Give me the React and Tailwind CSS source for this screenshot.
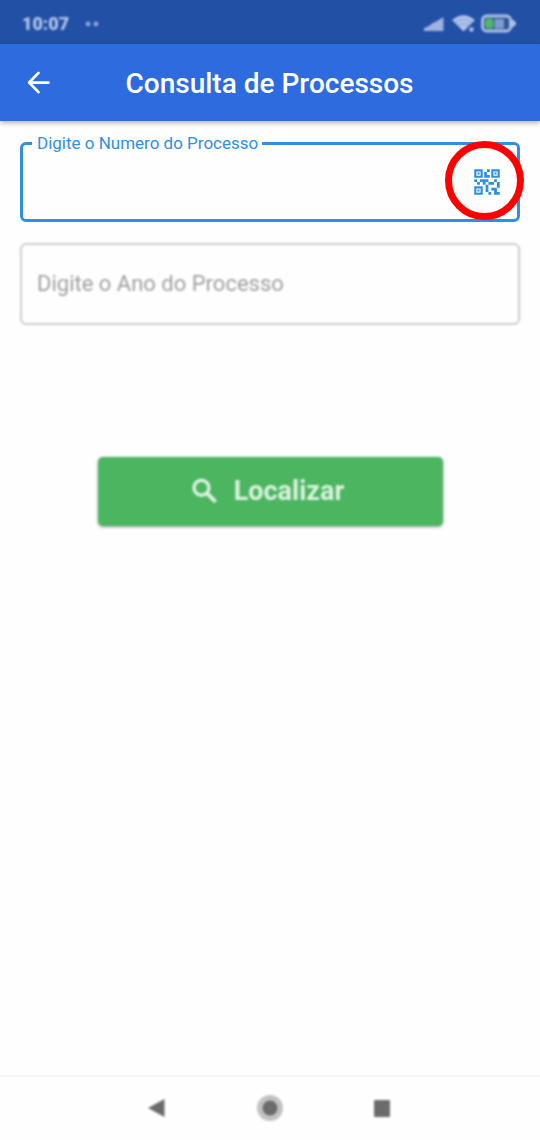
import { MdQrCode2 } from "react-icons/md";

function StatusBar() {
  return (
    <div className="flex h-11 items-center justify-between bg-[#2150a5] pt-1 pr-6 pl-[22px] text-[#b4c6ea]">
      <div className="flex items-center gap-4 blur-[1px]">
        <span className="text-[18px] leading-6 font-black">10:07</span>
        <svg width="14" height="6" viewBox="0 0 14 6" fill="#8fa9dc" aria-hidden="true">
          <circle cx="3" cy="3" r="2.4" />
          <circle cx="11" cy="3" r="2.4" />
        </svg>
      </div>
      <svg className="blur-[1px]" width="92" height="20" viewBox="0 0 92 20" aria-hidden="true">
        <path d="M0 17V14L4 12.500L8 9.500L12 7.500L19.500 3V17Z" fill="#9db3df" />
        <path d="M28 6Q39.500 -3.500 51 6L39.500 17.500Z" fill="#b0c4ea" />
        <path d="M31 8.500Q39.500 2.500 48 8.500M34 11.500Q39.500 8 45 11.500" fill="none" stroke="#7f9cd3" strokeWidth="1" />
        <circle cx="47.500" cy="15.500" r="2.300" fill="#b0c4ea" />
        <rect x="58.500" y="2" width="28" height="15" rx="4" fill="#2e5596" stroke="#b0c4ea" strokeWidth="2.800" />
        <path d="M88 5L93 9.500L88 14Z" fill="#b0c4ea" />
        <rect x="61" y="4.500" width="8.500" height="10" rx="3" fill="#4fb868" />
        <rect x="70.500" y="5" width="9.500" height="9.500" rx="1" fill="#7f9cd0" />
      </svg>
    </div>
  );
}

function Header() {
  return (
    <header className="relative flex h-[77px] items-center bg-[#2d6bdf] text-white shadow-[0_2px_5px_rgba(0,0,0,0.3)]">
      <button type="button" aria-label="Voltar" className="ml-[22px] shrink-0">
        <svg width="33" height="33" viewBox="0 0 24 24" fill="none" stroke="currentColor" strokeWidth="2" strokeLinecap="round" strokeLinejoin="round">
          <path d="M19.300 12H5.300M12 5L5.200 12L12 19" />
        </svg>
      </button>
      <h1 className="flex-1 pt-[2px] pr-[56px] text-center text-[28px] leading-9 font-medium">
        Consulta de Processos
      </h1>
    </header>
  );
}

function NumberField() {
  return (
    <div className="relative">
      <fieldset className="rounded-md border-[3px] border-[#2f8fe0] pl-[9px]">
        <legend className="pr-1 pl-[5px] text-[17px] leading-5 text-[#2f8fe0]">
          <label htmlFor="numero">Digite o Numero do Processo</label>
        </legend>
        <div className="flex h-[66px] items-center pr-[13px] pb-2">
          <input id="numero" type="text" className="h-12 min-w-0 flex-1 bg-transparent px-1 text-[22px] outline-none" />
          <button type="button" aria-label="Ler QR code" className="text-[#2f8fe0]">
            <MdQrCode2 size={34} />
          </button>
        </div>
      </fieldset>
      <div className="pointer-events-none absolute -right-1 bottom-[2px] size-[79px] rounded-full border-[7px] border-[#fe0000]" />
    </div>
  );
}

export default function App() {
  return (
    <div className="flex min-h-screen flex-col bg-[#fefefe] font-[Roboto,sans-serif]">
      <StatusBar />
      <Header />
      <main className="flex-1 px-5 pt-3">
        <form>
          <NumberField />
          <input
            type="text"
            aria-label="Digite o Ano do Processo"
            placeholder="Digite o Ano do Processo"
            className="mt-[21px] block h-[82px] w-full rounded-md border-2 border-[#cccccc] bg-transparent px-[15px] pb-[2px] text-[22px] blur-[1px] outline-none placeholder:text-[#a0a0a0]"
          />
          <button
            type="button"
            className="mx-auto mt-[132px] flex h-[69px] w-[69%] items-center justify-center gap-3 rounded-[5px] bg-[#4bb55f] pr-2 text-[27px] font-bold text-[#dcf2e0] shadow-[0_1px_3px_rgba(0,0,0,0.4)] blur-[1px]"
          >
            <svg width="34" height="34" viewBox="0 0 24 24" fill="none" stroke="currentColor" aria-hidden="true">
              <circle cx="9.500" cy="9" r="5.300" strokeWidth="2.400" />
              <path d="M13.500 13L19.500 19" strokeWidth="2.900" />
            </svg>
            Localizar
          </button>
        </form>
      </main>
      <nav className="flex h-[65px] items-center justify-between border-t-2 border-[#f7f7f7] px-[144px] pb-[2px] text-[#6b6b6b]">
        <button type="button" aria-label="Voltar" className="blur-[1px]">
          <svg width="24" height="24" viewBox="0 0 24 24" fill="currentColor">
            <path d="M4 12L20.500 3V21Z" />
          </svg>
        </button>
        <button type="button" aria-label="Início" className="blur-[1px]">
          <svg width="28" height="28" viewBox="0 0 28 28">
            <circle cx="14" cy="14" r="13" fill="#c2c2c2" />
            <circle cx="14" cy="14" r="7.500" fill="currentColor" />
          </svg>
        </button>
        <button type="button" aria-label="Recentes" className="blur-[1px]">
          <svg width="24" height="24" viewBox="0 0 24 24" fill="currentColor">
            <rect x="2" y="4" width="16" height="17" rx="1" />
          </svg>
        </button>
      </nav>
    </div>
  );
}
